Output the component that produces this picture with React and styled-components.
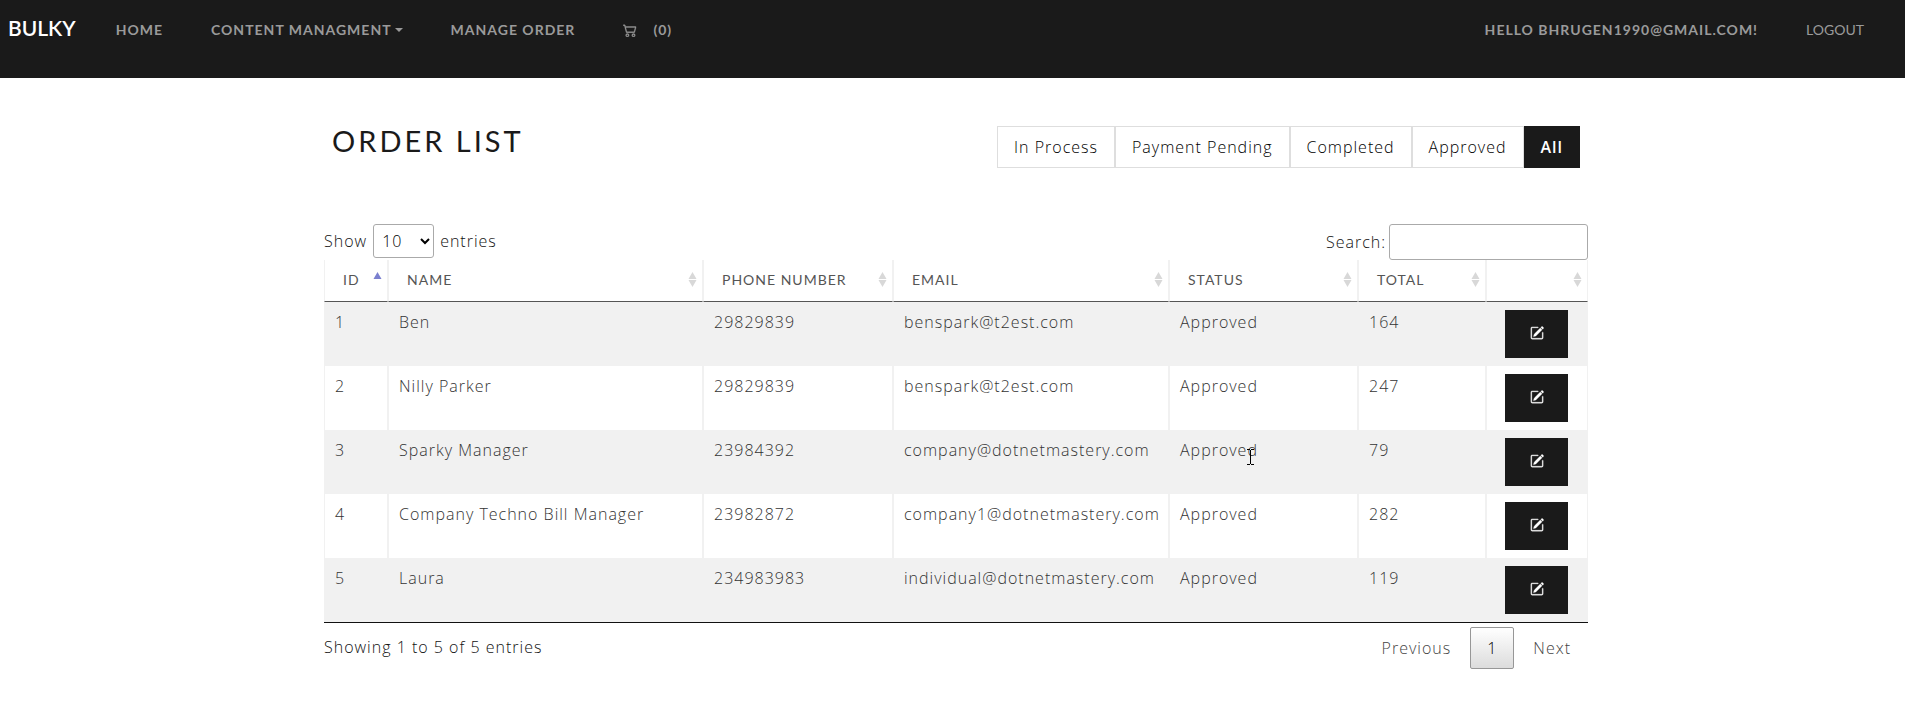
import React from "react";
import styled, { createGlobalStyle } from "styled-components";
import { BsCart2, BsPencilSquare } from "react-icons/bs";

const GlobalStyle = createGlobalStyle`
  *, *::before, *::after { box-sizing: border-box; }
  body {
    margin: 0;
    background: #fff;
    color: #111;
    font: 300 16px/24px "Open Sans", sans-serif;
    letter-spacing: 1px;
  }
  button, input, select { font: inherit; color: inherit; letter-spacing: inherit; }
`;

const Navbar = styled.header`
  display: flex;
  align-items: flex-start;
  min-height: 78px;
  padding: 12px 41px 0 8px;
  background: #1a1a1a;
  font-family: Lato, sans-serif;
`;

const Brand = styled.a`
  margin-right: 32px;
  padding-top: 4px;
  color: #fff;
  font-size: 21px;
  font-weight: 600;
  text-decoration: none;
  letter-spacing: 0;
`;

const NavGroup = styled.nav`
  display: flex;
  align-items: center;
  flex: ${(p) => (p.$grow ? 1 : "none")};
  gap: 48px;
  padding-left: ${(p) => (p.$grow ? "8px" : 0)};
`;

const NavLink = styled.a`
  display: flex;
  align-items: center;
  padding-top: 6px;
  gap: ${(p) => p.$gap || 0}px;
  color: #9a9a9a;
  font-size: 14px;
  font-weight: ${(p) => (p.$light ? 400 : 700)};
  letter-spacing: ${(p) => (p.$light ? 0 : 1)}px;
  text-decoration: none;
  text-transform: uppercase;
`;

const Caret = styled.span`
  margin-left: 3px;
  border: 4px solid transparent;
  border-top-color: currentColor;
  border-bottom: 0;
`;

const Main = styled.main`
  max-width: 1271px;
  margin: 0 auto;
  padding: 48px 0 48px 7px;
`;

const TitleRow = styled.div`
  display: flex;
  align-items: flex-start;
  justify-content: space-between;
  padding: 0 8px;
`;

const Title = styled.h1`
  margin: 0;
  color: #1a1a1a;
  font-size: 29px;
  line-height: 30px;
  font-weight: 400;
  font-family: Lato, sans-serif;
  letter-spacing: 3px;
  text-transform: uppercase;
`;

const Filters = styled.ul`
  display: flex;
  margin: 0;
  padding: 0;
  list-style: none;
`;

const FilterLink = styled.a`
  display: block;
  padding: 8px 16px;
  border: 1px solid ${(p) => (p.$active ? "#1a1a1a" : "#dedede")};
  background: ${(p) => (p.$active ? "#1a1a1a" : "#fff")};
  color: ${(p) => (p.$active ? "#fff" : "#000")};
  font-weight: ${(p) => (p.$active ? 600 : 300)};
  text-decoration: none;
`;

const TableTools = styled.div`
  display: flex;
  align-items: flex-start;
  justify-content: space-between;
  margin-top: 56px;
`;

const ToolLabel = styled.label`
  display: flex;
  align-items: center;
  gap: ${(p) => p.$gap}px;
`;

const LengthSelect = styled.select`
  width: 61px;
  height: 34px;
  padding: 4px;
  border: 1px solid #aaa;
  border-radius: 3px;
  background: transparent;
  color: #000;
`;

const SearchInput = styled.input`
  width: 199px;
  height: 36px;
  padding: 5px;
  border: 1px solid #aaa;
  border-radius: 3px;
  background: transparent;
`;

const OrderTable = styled.table`
  width: 100%;
  table-layout: fixed;
  border-collapse: separate;
  border-spacing: 0;
  border-bottom: 1px solid #111;
  color: #333;
`;

const HeadCell = styled.th`
  width: ${(p) => p.$width}px;
  height: 42px;
  padding: 0 5px 1px 18px;
  border: 1px solid #f1f1f1;
  border-top: 0;
  border-bottom-color: #555;
  color: #555;
  font-family: Lato, sans-serif;
  font-size: 14px;
  font-weight: 400;
  text-align: left;
  text-transform: uppercase;
`;

const HeadContent = styled.div`
  display: flex;
  align-items: center;
  justify-content: space-between;
  white-space: nowrap;
`;

const Row = styled.tr`
  background: ${(p) => (p.$striped ? "#f1f1f1" : "#fff")};
`;

const Cell = styled.td`
  height: 64px;
  padding: 8px 10px;
  border: solid #f1f1f1;
  border-width: 0 1px;
  vertical-align: top;
  white-space: nowrap;
`;

const ActionCell = styled(Cell)`
  padding: 8px 18px;
`;

const EditButton = styled.button`
  display: flex;
  align-items: center;
  justify-content: center;
  width: 63px;
  height: 48px;
  padding: 0 0 2px;
  border: 0;
  background: #1a1a1a;
  color: #fff;
  svg { stroke: currentColor; stroke-width: 0.4; }
`;

const TableFooter = styled.div`
  display: flex;
  align-items: flex-start;
  justify-content: space-between;
  padding-top: 4px;
`;

const TableInfo = styled.div`
  padding-top: 8px;
`;

const Pager = styled.nav`
  display: flex;
  gap: 2px;
`;

const PageButton = styled.button`
  padding: 8px 16px;
  border: 1px solid ${(p) => (p.$current ? "#979797" : "transparent")};
  border-radius: 2px;
  background: ${(p) => (p.$current ? "linear-gradient(#fff, #dcdcdc)" : "transparent")};
  color: ${(p) => (p.$current ? "#000" : "#444")};
`;

const PointerMark = styled.svg`
  position: absolute;
  left: 67px;
  top: 10px;
`;

const StatusText = styled.span`
  position: relative;
`;

const columns = [
  ["Id", 64],
  ["Name", 315],
  ["Phone Number", 190],
  ["Email", 276],
  ["Status", 189],
  ["Total", 128],
  ["", 102],
];

const orders = [
  [1, "Ben", "29829839", "benspark@t2est.com", "Approved", 164],
  [2, "Nilly Parker", "29829839", "benspark@t2est.com", "Approved", 247],
  [3, "Sparky Manager", "23984392", "company@dotnetmastery.com", "Approved", 79],
  [4, "Company Techno Bill Manager", "23982872", "company1@dotnetmastery.com", "Approved", 282],
  [5, "Laura", "234983983", "individual@dotnetmastery.com", "Approved", 119],
];

const filters = ["In Process", "Payment Pending", "Completed", "Approved", "All"];

function SortIcon({ ascending }) {
  return (
    <svg width="9" height="16" viewBox="0 0 9 16" aria-hidden="true">
      <path d="M4.5 0 8.5 7h-8z" fill={ascending ? "#7b80cf" : "#d8d8d8"} />
      {!ascending && <path d="M.5 8h8l-4 7z" fill="#d8d8d8" />}
    </svg>
  );
}

function TextCursor() {
  return (
    <PointerMark width="7" height="16" viewBox="0 0 7 16" aria-hidden="true">
      <path d="M0 .5h3M4 .5h3M3.500 1v14M0 15.500h3M4 15.500h3" stroke="#000" fill="none" />
    </PointerMark>
  );
}

export default function App() {
  return (
    <>
      <GlobalStyle />
      <Navbar>
        <Brand href="#">BULKY</Brand>
        <NavGroup $grow>
          <NavLink href="#">Home</NavLink>
          <NavLink href="#">Content Managment<Caret /></NavLink>
          <NavLink href="#">Manage Order</NavLink>
          <NavLink href="#" $gap={16}><BsCart2 size={14} strokeWidth={0.4} /> (0)</NavLink>
        </NavGroup>
        <NavGroup>
          <NavLink href="#">Hello bhrugen1990@gmail.com!</NavLink>
          <NavLink href="#" $light>Logout</NavLink>
        </NavGroup>
      </Navbar>
      <Main>
        <TitleRow>
          <Title>Order List</Title>
          <Filters>
            {filters.map((name) => (
              <li key={name}>
                <FilterLink href="#" $active={name === "All"}>{name}</FilterLink>
              </li>
            ))}
          </Filters>
        </TitleRow>
        <TableTools>
          <ToolLabel $gap={6}>
            Show
            <LengthSelect defaultValue="10">
              <option>10</option>
              <option>25</option>
              <option>50</option>
              <option>100</option>
            </LengthSelect>
            entries
          </ToolLabel>
          <ToolLabel $gap={3}>
            Search:
            <SearchInput type="search" />
          </ToolLabel>
        </TableTools>
        <OrderTable>
          <thead>
            <tr>
              {columns.map(([label, width], i) => (
                <HeadCell key={width} $width={width}>
                  <HeadContent>
                    <span>{label}</span>
                    <SortIcon ascending={i === 0} />
                  </HeadContent>
                </HeadCell>
              ))}
            </tr>
          </thead>
          <tbody>
            {orders.map(([id, name, phone, email, status, total]) => (
              <Row key={id} $striped={id % 2 === 1}>
                <Cell>{id}</Cell>
                <Cell>{name}</Cell>
                <Cell>{phone}</Cell>
                <Cell>{email}</Cell>
                <Cell>
                  <StatusText>
                    {status}
                    {id === 3 && <TextCursor />}
                  </StatusText>
                </Cell>
                <Cell>{total}</Cell>
                <ActionCell>
                  <EditButton type="button" aria-label={`Edit order ${id}`}>
                    <BsPencilSquare size={14} />
                  </EditButton>
                </ActionCell>
              </Row>
            ))}
          </tbody>
        </OrderTable>
        <TableFooter>
          <TableInfo>Showing 1 to 5 of 5 entries</TableInfo>
          <Pager aria-label="Pages">
            <PageButton type="button">Previous</PageButton>
            <PageButton type="button" $current>1</PageButton>
            <PageButton type="button">Next</PageButton>
          </Pager>
        </TableFooter>
      </Main>
    </>
  );
}
